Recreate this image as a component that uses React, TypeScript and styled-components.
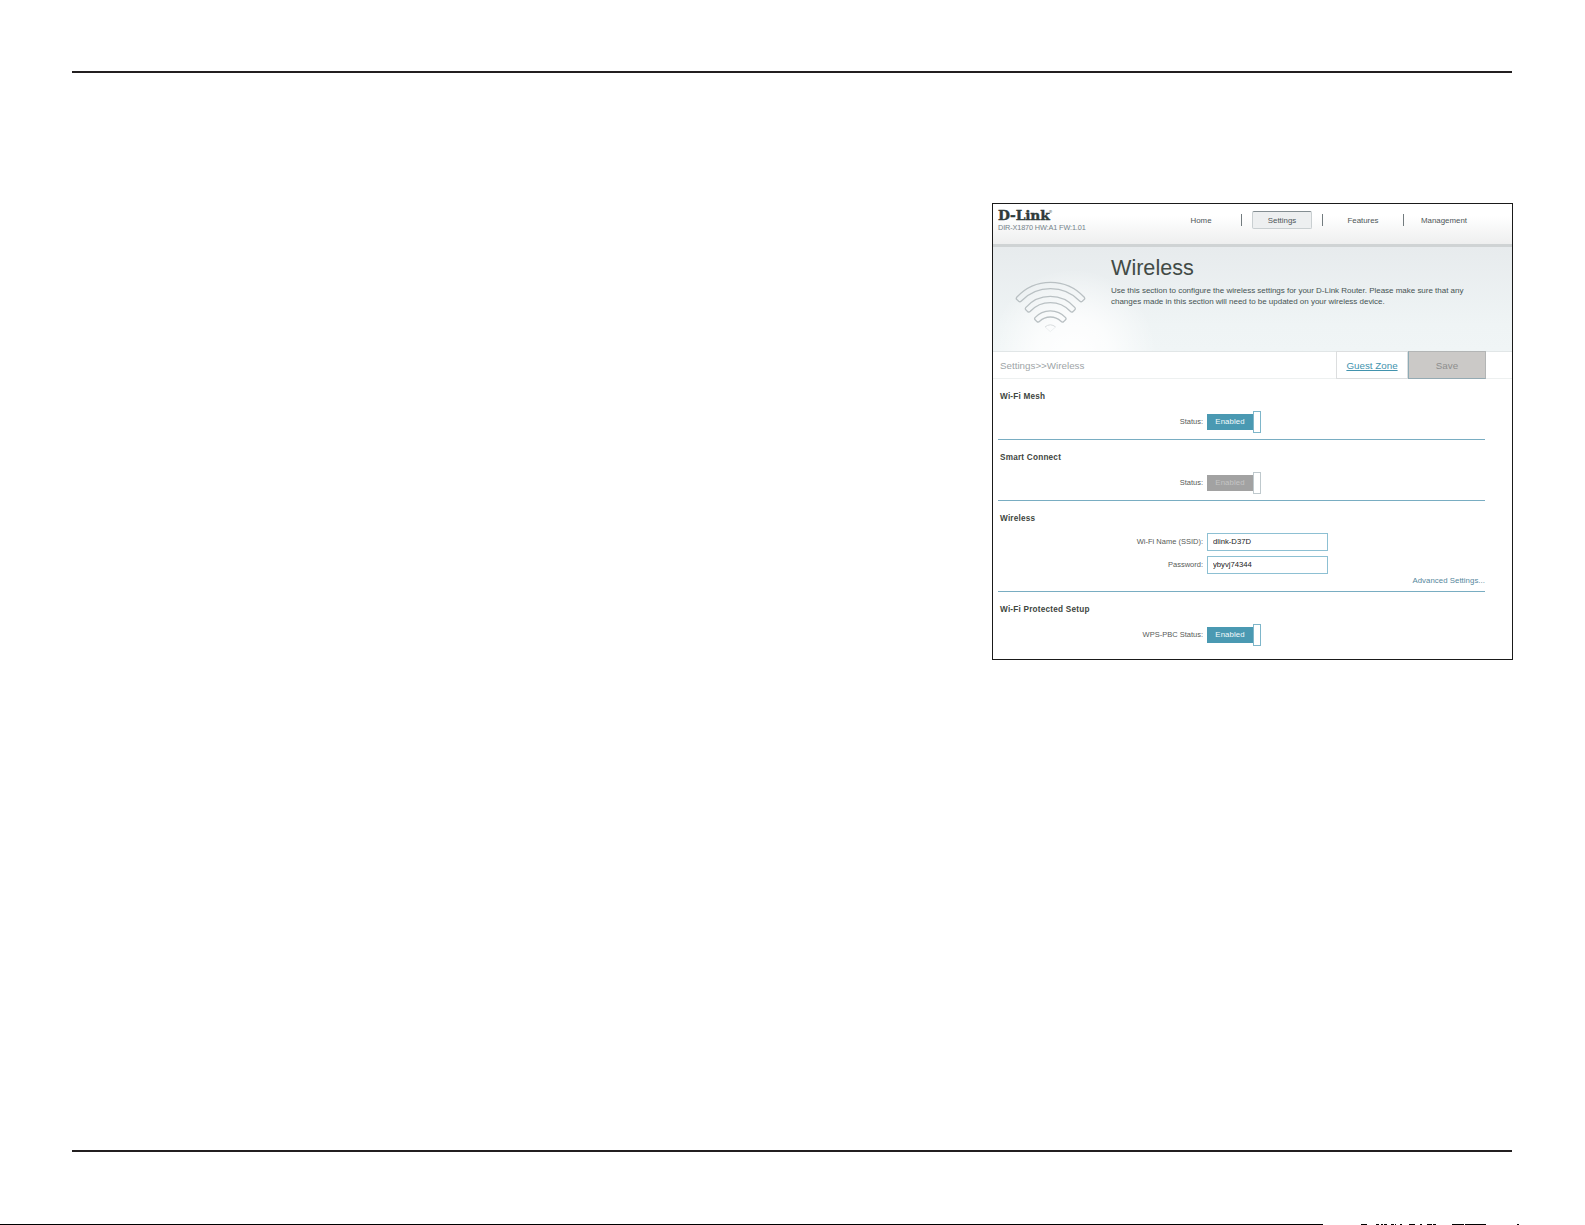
import React, { useState } from "react";
import styled, { createGlobalStyle } from "styled-components";

const GlobalStyle = createGlobalStyle`
  * {
    box-sizing: border-box;
  }
  body {
    margin: 0;
    background: #fff;
    font-family: "Liberation Sans", Arial, sans-serif;
    overflow: hidden;
  }
`;

const Page = styled.div`
  height: 1225px;
  padding-top: 71px;
  display: flex;
  flex-direction: column;
  background: #fff;
`;

const Rule = styled.div`
  height: 2px;
  margin: 0 73px 0 72px;
  background: #231f20;
`;

const PageBody = styled.main`
  height: 1077px;
  padding: 130px 72px 0 0;
  display: flex;
  justify-content: flex-end;
  align-items: flex-start;
`;

const PageEdge = styled.div`
  height: 1px;
  margin-top: auto;
  display: flex;
`;

const EdgeMark = styled.span<{ $gap: number; $width: number }>`
  height: 1px;
  width: ${({ $width }) => $width}px;
  margin-left: ${({ $gap }) => $gap}px;
  background: #000;
`;

const Panel = styled.section`
  width: 521px;
  height: 457px;
  border: 1px solid #1a1a1a;
  background: #fff;
`;

const Header = styled.header`
  height: 43px;
  display: flex;
  justify-content: space-between;
  border-bottom: 3px solid #cfd3d4;
  background: linear-gradient(#fff 30%, #eeefef);
`;

const Brand = styled.div`
  padding: 4px 0 0 5px;
`;

const Logo = styled.div`
  height: 15px;
  line-height: 14px;
  font-family: "DejaVu Serif", serif;
  font-weight: bold;
  font-size: 13.8px;
  letter-spacing: -0.15px;
  color: #2f3b3a;
  -webkit-text-stroke: 0.4px #2f3b3a;
  white-space: nowrap;

  sup {
    margin-left: -1px;
    font-size: 4px;
    line-height: 0;
    vertical-align: 7px;
    font-weight: normal;
    -webkit-text-stroke: 0;
  }
`;

const Model = styled.div`
  line-height: 10px;
  font-size: 7.3px;
  letter-spacing: -0.13px;
  color: #74828a;
  white-space: nowrap;
`;

const Nav = styled.nav`
  height: 18px;
  margin: 7px 28px 0 0;
  display: flex;
  align-items: center;
`;

const NavCell = styled.div`
  width: 80px;
  display: flex;
  justify-content: center;
`;

const NavDivider = styled.span`
  width: 1px;
  height: 12px;
  background: #727b7e;
`;

const NavItem = styled.a<{ $active?: boolean }>`
  width: 60px;
  height: 18px;
  line-height: 17px;
  text-align: center;
  font-size: 7.9px;
  color: #4e5658;
  border: 1px solid ${({ $active }) => ($active ? "#c9cfd1" : "transparent")};
  border-top-color: ${({ $active }) => ($active ? "#848e92" : "transparent")};
  border-radius: 2px;
  background: ${({ $active }) => ($active ? "#edeff0" : "none")};
`;

const Banner = styled.div`
  height: 104px;
  display: flex;
  background: radial-gradient(
      ellipse 84px 88px at 80px 110px,
      #fff 0%,
      rgba(255, 255, 255, 0.75) 45%,
      rgba(255, 255, 255, 0) 100%
    ),
    linear-gradient(#e7ebed, #eff4f5 75%, #f0f5f6);
`;

const BannerIcon = styled.div`
  width: 118px;
  padding: 33px 0 0 22px;
`;

const Title = styled.h1`
  margin: 9px 0 0;
  font-weight: normal;
  font-size: 21.6px;
  line-height: 24px;
  color: #424b46;
`;

const Description = styled.p`
  margin: 6px 0 0;
  font-size: 8px;
  line-height: 10.7px;
  letter-spacing: -0.02px;
  color: #465453;
  white-space: nowrap;
`;

const Toolbar = styled.div`
  height: 28px;
  padding: 0 26px 0 7px;
  display: flex;
  border-top: 1px solid #e1e6e7;
  border-bottom: 1px solid #edf0f0;
`;

const Breadcrumb = styled.div`
  flex: 1;
  line-height: 27px;
  font-size: 9.8px;
  color: #9ea5a7;
`;

const ToolbarButton = styled.button<{ $link?: boolean }>`
  width: ${({ $link }) => ($link ? 72 : 78)}px;
  height: 28px;
  margin-top: -1px;
  padding: 0;
  font-family: inherit;
  font-size: 9.8px;
  color: ${({ $link }) => ($link ? "#4293ae" : "#8e8e8e")};
  text-decoration: ${({ $link }) => ($link ? "underline" : "none")};
  border: 1px solid ${({ $link }) => ($link ? "#dcdedf" : "#b3b5b5")};
  border-left-color: ${({ $link }) => ($link ? "#dcdedf" : "#8eabb5")};
  border-bottom-color: ${({ $link }) => ($link ? "#dcdedf" : "#94aab3")};
  background: ${({ $link }) => ($link ? "#fff" : "#cbc9c7")};
`;

const Section = styled.section<{ $height: number; $last?: boolean }>`
  height: ${({ $height }) => $height}px;
  margin: 0 27px 0 5px;
  border-bottom: ${({ $last }) => ($last ? "none" : "1px solid #79adc2")};
`;

const SectionTitle = styled.h2`
  height: 32px;
  margin: 0;
  padding: 12px 0 0 2px;
  font-size: 8.2px;
  line-height: 11px;
  letter-spacing: 0.22px;
  color: #3e4540;
`;

const Field = styled.div<{ $height: number }>`
  height: ${({ $height }) => $height}px;
  display: flex;
  align-items: center;
  margin-bottom: 5px;
`;

const FieldLabel = styled.label`
  width: 205px;
  margin-right: 4px;
  text-align: right;
  font-size: 7.5px;
  line-height: 10px;
  padding-bottom: 1px;
  color: #585b59;
`;

const Switch = styled.button<{ $disabled?: boolean }>`
  padding: 0;
  border: 0;
  background: none;
  display: flex;
  align-items: center;
  font-family: inherit;

  span {
    width: 46px;
    height: 16px;
    line-height: 15px;
    font-size: 7.8px;
    text-align: center;
    letter-spacing: 0.1px;
    color: ${({ $disabled }) => ($disabled ? "#c4c4c4" : "#f4fafc")};
    background: ${({ $disabled }) => ($disabled ? "#a2a2a2" : "#4a99b2")};
  }

  i {
    width: 8px;
    height: 22px;
    background: #fff;
    border: 1px solid ${({ $disabled }) => ($disabled ? "#bfc9cd" : "#7eb6ca")};
  }
`;

const TextInput = styled.input`
  width: 121px;
  height: 18px;
  padding: 0 5px 1px;
  border: 1px solid #8dc0d3;
  outline: none;
  font-family: inherit;
  font-size: 7.7px;
  color: #222;
`;

const Advanced = styled.a`
  display: block;
  margin-top: -3px;
  text-align: right;
  font-size: 7.8px;
  line-height: 10px;
  letter-spacing: 0.05px;
  color: #56879c;
`;

const MENU = ["Home", "Settings", "Features", "Management"];

// [gap before, width] of the marks on the bottom edge of the page
const EDGE_MARKS = [
  [0, 1323],
  [38, 6],
  [9, 3],
  [2, 2],
  [1, 3],
  [4, 3],
  [1, 1],
  [4, 2],
  [7, 6],
  [5, 2],
  [5, 5],
  [1, 3],
  [16, 12],
  [1, 21],
  [31, 2],
];

const WifiIcon = () => (
  <svg width="71.3" height="53.3" viewBox="90 256 214 160" fill="none">
    <g stroke="#b9c0c3" strokeWidth="4" strokeLinejoin="round">
      <path d="M95 308A137 137 0 0 1 298 308Q301 312 297 315L292 320Q288 323 284 319A122 122 0 0 0 109 319Q105 323 101 320L96 315Q92 312 95 308Z" />
      <path d="M122 339A98 98 0 0 1 270 339Q273 343 269 346L264 351Q260 354 256 350A82 82 0 0 0 136 350Q132 354 128 351L123 346Q119 343 122 339Z" />
      <path d="M150 369A62 62 0 0 1 242 369Q245 373 241 376L236 381Q232 384 228 380A46 46 0 0 0 164 380Q160 384 156 381L151 376Q147 373 150 369Z" />
    </g>
    <path d="M180 397Q196 384 212 397" stroke="#d8dcde" strokeWidth="3" />
    <path d="M180 397L196 411L212 397" stroke="#eceff0" strokeWidth="3" />
  </svg>
);

const Toggle = ({ disabled = false }: { disabled?: boolean }) => (
  <Switch type="button" $disabled={disabled} disabled={disabled}>
    <span>Enabled</span>
    <i />
  </Switch>
);

const App = () => {
  const [ssid, setSsid] = useState("dlink-D37D");
  const [password, setPassword] = useState("ybyvj74344");

  return (
    <Page>
      <GlobalStyle />
      <Rule />
      <PageBody>
        <Panel>
          <Header>
            <Brand>
              <Logo>
                D-Link<sup>®</sup>
              </Logo>
              <Model>DIR-X1870 HW:A1 FW:1.01</Model>
            </Brand>
            <Nav>
              {MENU.map((item, index) => (
                <React.Fragment key={item}>
                  {index > 0 && <NavDivider />}
                  <NavCell>
                    <NavItem $active={item === "Settings"}>{item}</NavItem>
                  </NavCell>
                </React.Fragment>
              ))}
            </Nav>
          </Header>
          <Banner>
            <BannerIcon>
              <WifiIcon />
            </BannerIcon>
            <div>
              <Title>Wireless</Title>
              <Description>
                Use this section to configure the wireless settings for your
                D-Link Router. Please make sure that any
                <br />
                changes made in this section will need to be updated on your
                wireless device.
              </Description>
            </div>
          </Banner>
          <Toolbar>
            <Breadcrumb>Settings&gt;&gt;Wireless</Breadcrumb>
            <ToolbarButton $link>Guest Zone</ToolbarButton>
            <ToolbarButton>Save</ToolbarButton>
          </Toolbar>
          <Section $height={61}>
            <SectionTitle>Wi-Fi Mesh</SectionTitle>
            <Field $height={22}>
              <FieldLabel>Status:</FieldLabel>
              <Toggle />
            </Field>
          </Section>
          <Section $height={61}>
            <SectionTitle>Smart Connect</SectionTitle>
            <Field $height={22}>
              <FieldLabel>Status:</FieldLabel>
              <Toggle disabled />
            </Field>
          </Section>
          <Section $height={91}>
            <SectionTitle>Wireless</SectionTitle>
            <Field $height={18}>
              <FieldLabel>Wi-Fi Name (SSID):</FieldLabel>
              <TextInput
                value={ssid}
                onChange={(e) => setSsid(e.target.value)}
              />
            </Field>
            <Field $height={18}>
              <FieldLabel>Password:</FieldLabel>
              <TextInput
                value={password}
                onChange={(e) => setPassword(e.target.value)}
              />
            </Field>
            <Advanced>Advanced Settings...</Advanced>
          </Section>
          <Section $height={67} $last>
            <SectionTitle>Wi-Fi Protected Setup</SectionTitle>
            <Field $height={22}>
              <FieldLabel>WPS-PBC Status:</FieldLabel>
              <Toggle />
            </Field>
          </Section>
        </Panel>
      </PageBody>
      <Rule />
      <PageEdge>
        {EDGE_MARKS.map(([gap, width], index) => (
          <EdgeMark key={index} $gap={gap} $width={width} />
        ))}
      </PageEdge>
    </Page>
  );
};

export default App;
